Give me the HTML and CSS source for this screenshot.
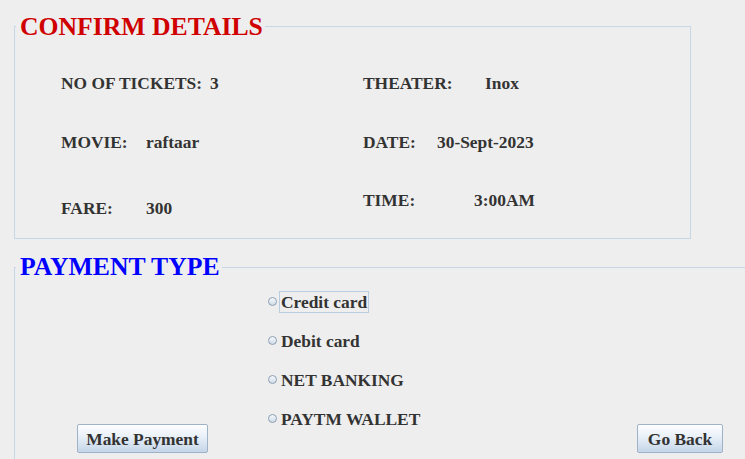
FILE: index.html
```html
<!DOCTYPE html>
<html>
<head>
<meta charset="utf-8">
<link rel="stylesheet" href="styles.css">
</head>
<body>
  <section class="panel panel-confirm">
    <h1 class="panel-title title-red">CONFIRM DETAILS</h1>
    <div class="details">
      <div class="col col-left">
        <div class="field row-1"><span class="lbl lbl-tickets">NO OF TICKETS:</span><span class="val">3</span></div>
        <div class="field row-2"><span class="lbl lbl-movie">MOVIE:</span><span class="val">raftaar</span></div>
        <div class="field row-3"><span class="lbl lbl-fare">FARE:</span><span class="val">300</span></div>
      </div>
      <div class="col col-right">
        <div class="field row-1"><span class="lbl lbl-theater">THEATER:</span><span class="val">Inox</span></div>
        <div class="field row-2"><span class="lbl lbl-date">DATE:</span><span class="val">30-Sept-2023</span></div>
        <div class="field row-3b"><span class="lbl lbl-time">TIME:</span><span class="val">3:00AM</span></div>
      </div>
    </div>
  </section>

  <section class="panel panel-payment">
    <h1 class="panel-title title-blue">PAYMENT TYPE</h1>
    <div class="payment-body">
      <div class="btn-cell btn-cell-left"><button class="btn btn-pay">Make Payment</button></div>
      <div class="radios">
        <label class="radio"><span class="dot"></span><span class="radio-text focused">Credit card</span></label>
        <label class="radio"><span class="dot"></span><span class="radio-text">Debit card</span></label>
        <label class="radio"><span class="dot"></span><span class="radio-text">NET BANKING</span></label>
        <label class="radio"><span class="dot"></span><span class="radio-text">PAYTM WALLET</span></label>
      </div>
      <div class="btn-cell btn-cell-right"><button class="btn btn-back">Go Back</button></div>
    </div>
  </section>
</body>
</html>
```

FILE: styles.css
```css
* { box-sizing: border-box; }

html, body {
  margin: 0;
  padding: 0;
  background: #eeeeee;
  overflow: hidden;
}

body {
  width: 745px;
  height: 459px;
  font-family: "Liberation Serif", "Times New Roman", serif;
  font-weight: bold;
  color: #333333;
  padding-top: 26px;
}

.panel {
  border: 1px solid #c8d7e6;
  margin-left: 14px;
}

.panel-confirm {
  width: 677px;
  height: 213px;
}

.panel-payment {
  margin-top: 28px;
  border-right: none;
  border-bottom: none;
  height: 200px;
}

.panel-title {
  display: inline-block;
  margin: -15px 0 0 1px;
  padding: 0 2px 0 4px;
  background: #eeeeee;
  font-size: 25.7px;
  line-height: 30px;
  font-weight: bold;
  vertical-align: top;
}

.title-red { color: #d00000; }
.title-blue { color: #0000ff; margin-top: -16px; }

.details {
  display: flex;
  font-size: 17.4px;
  line-height: 20px;
}

.col {
  display: flex;
  flex-direction: column;
}

.col-left { margin-left: 46px; width: 302px; }

.field { display: flex; white-space: nowrap; }

.row-1 { margin-top: 28px; }
.row-2 { margin-top: 39px; }
.row-3 { margin-top: 46px; }
.row-3b { margin-top: 38px; }

.lbl { display: inline-block; }
.lbl-tickets { margin-right: 8px; }
.lbl-movie, .lbl-fare { width: 85px; }
.lbl-theater { width: 122px; }
.lbl-date { width: 74px; }
.lbl-time { width: 111px; }

.payment-body {
  display: grid;
  grid-template-columns: 253px 369px 1fr;
  font-size: 17.4px;
  line-height: 20px;
}

.radios {
  display: flex;
  flex-direction: column;
  gap: 17px;
  margin-top: 5px;
}

.radio {
  display: flex;
  align-items: center;
  height: 22px;
}

.dot {
  width: 9px;
  height: 9px;
  border-radius: 50%;
  border: 1px solid #8e9fb3;
  background: linear-gradient(#f6f9fc, #cfdbe8);
  margin-right: 2px;
  flex: none;
  position: relative;
  top: -1px;
}

.radio-text {
  border: 1px solid transparent;
  padding: 0 1px;
  height: 22px;
  color: #333333;
}

.radio-text.focused { border-color: #b9cde2; }

.btn-cell { margin-top: 138px; }
.btn-cell-left { padding-left: 62px; }
.btn-cell-right { padding-left: 0; }

.btn {
  height: 29px;
  border: 1px solid #9fb2c8;
  border-radius: 2px;
  background: linear-gradient(#fdfeff 0%, #eaf1f8 40%, #c5d6e9 100%);
  font-family: "Liberation Serif", "Times New Roman", serif;
  font-weight: bold;
  font-size: 17.4px;
  line-height: 26px;
  color: #333333;
  padding: 0;
  text-align: center;
}

.btn-pay { width: 131px; }
.btn-back { width: 86px; }
```
